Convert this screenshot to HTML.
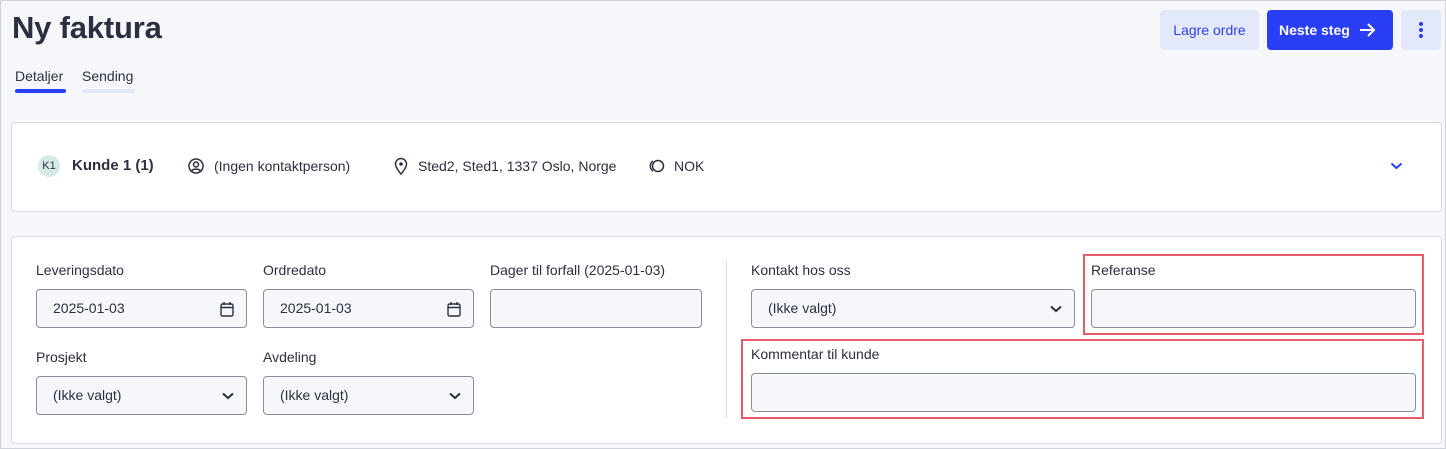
<!DOCTYPE html><html><head><style>
*{box-sizing:border-box;margin:0;padding:0}
body{width:1446px;height:449px;background:#f6f7fb;font-family:"Liberation Sans",sans-serif;color:#2b3040;position:relative;overflow:hidden}
.frame{position:absolute;left:0;top:0;width:1446px;height:449px;border:1px solid #cfd2d8;pointer-events:none}
.a{position:absolute}
.card{position:absolute;background:#fff;border:1px solid #d8dbe0;border-radius:4px}
.lbl{position:absolute;font-size:14px;color:#2b3040}
.inp{position:absolute;height:39px;background:#f6f7fb;border:1px solid #8a8e99;border-radius:4px;font-size:14px;padding:0 16px;line-height:37px}
.ic{position:absolute;right:12px;top:11px}
.red{position:absolute;border:2px solid #e85b6a}
</style></head><body>
<div class="a" style="left:12px;top:10px;font-size:31px;font-weight:bold;letter-spacing:-0.2px">Ny faktura</div>
<div class="a" style="left:15px;top:68px;font-size:14px">Detaljer</div>
<div class="a" style="left:15px;top:89px;width:51px;height:4px;border-radius:2px;background:#2a3ff5"></div>
<div class="a" style="left:82px;top:68px;font-size:14px">Sending</div>
<div class="a" style="left:82px;top:89px;width:53px;height:4px;border-radius:2px;background:#e3e8f8"></div>
<div class="a" style="left:1160px;top:10px;width:99px;height:40px;background:#e3e8fb;border-radius:4px;color:#2b3ff0;font-size:14px;text-align:center;line-height:40px">Lagre ordre</div>
<div class="a" style="left:1267px;top:10px;width:126px;height:40px;background:#2a3ef5;border-radius:4px;color:#fff;font-size:14px;line-height:40px;padding-left:12px;font-weight:bold">Neste steg
<svg class="a" style="left:92px;top:12px" width="17" height="16" viewBox="0 0 17 16"><path d="M1 8H15M9 2L15 8L9 14" stroke="#fff" stroke-width="2" fill="none"/></svg></div>
<div class="a" style="left:1401px;top:10px;width:40px;height:40px;background:#e3e8fb;border-radius:4px">
<svg class="a" style="left:17px;top:11px" width="6" height="18"><circle cx="3" cy="3" r="2" fill="#2b3ff0"/><circle cx="3" cy="9" r="2" fill="#2b3ff0"/><circle cx="3" cy="15" r="2" fill="#2b3ff0"/></svg></div>

<div class="card" style="left:11px;top:122px;width:1431px;height:90px"></div>
<div class="a" style="left:38px;top:155px;width:22px;height:22px;border-radius:50%;background:#d6ebe8;font-size:11px;text-align:center;line-height:22px">K1</div>
<div class="a" style="left:72px;top:157px;font-size:15px;font-weight:bold">Kunde 1 (1)</div>
<svg class="a" style="left:188px;top:158px" width="16" height="16" viewBox="0 0 16 16"><circle cx="8" cy="8" r="7" stroke="#2b3040" stroke-width="1.5" fill="none"/><circle cx="8" cy="6.5" r="2.5" stroke="#2b3040" stroke-width="1.5" fill="none"/><path d="M3.5 13C5 10.5 11 10.5 12.5 13" stroke="#2b3040" stroke-width="1.5" fill="none"/></svg>
<div class="a" style="left:214px;top:158px;font-size:14px">(Ingen kontaktperson)</div>
<svg class="a" style="left:394px;top:157px" width="14" height="18" viewBox="0 0 14 18"><path d="M7 17C7 17 1.5 11 1.5 7A5.5 5.5 0 0 1 12.5 7C12.5 11 7 17 7 17Z" stroke="#2b3040" stroke-width="1.5" fill="none"/><circle cx="7" cy="7" r="1.8" fill="#2b3040"/></svg>
<div class="a" style="left:418px;top:158px;font-size:14px">Sted2, Sted1, 1337 Oslo, Norge</div>
<svg class="a" style="left:648px;top:159px" width="18" height="14" viewBox="0 0 18 14"><circle cx="10" cy="7" r="5.5" stroke="#2b3040" stroke-width="1.5" fill="none"/><path d="M5 2A6 6 0 0 0 5 12" stroke="#2b3040" stroke-width="1.5" fill="none"/></svg>
<div class="a" style="left:674px;top:158px;font-size:14px">NOK</div>
<svg class="a" style="left:1390px;top:162px" width="13" height="8" viewBox="0 0 13 8"><path d="M1.5 1.5L6.5 6L11.5 1.5" stroke="#2b3ff0" stroke-width="2" fill="none"/></svg>

<div class="card" style="left:11px;top:236px;width:1431px;height:208px"></div>
<div class="lbl" style="left:36px;top:262px">Leveringsdato</div>
<div class="inp" style="left:36px;top:289px;width:211px">2025-01-03<svg class="ic" width="14" height="16" viewBox="0 0 14 16"><rect x="1" y="3" width="12" height="12" rx="1.5" stroke="#2b3040" stroke-width="1.4" fill="none"/><path d="M1 6.5H13M4 1V4M10 1V4" stroke="#2b3040" stroke-width="1.4"/></svg></div>
<div class="lbl" style="left:263px;top:262px">Ordredato</div>
<div class="inp" style="left:263px;top:289px;width:211px">2025-01-03<svg class="ic" width="14" height="16" viewBox="0 0 14 16"><rect x="1" y="3" width="12" height="12" rx="1.5" stroke="#2b3040" stroke-width="1.4" fill="none"/><path d="M1 6.5H13M4 1V4M10 1V4" stroke="#2b3040" stroke-width="1.4"/></svg></div>
<div class="lbl" style="left:490px;top:262px">Dager til forfall (2025-01-03)</div>
<div class="inp" style="left:490px;top:289px;width:212px"></div>
<div class="lbl" style="left:36px;top:349px">Prosjekt</div>
<div class="inp" style="left:36px;top:376px;width:211px">(Ikke valgt)<svg class="ic" style="top:15px" width="12" height="8" viewBox="0 0 12 8"><path d="M1 1.5L6 6L11 1.5" stroke="#2b3040" stroke-width="2" fill="none"/></svg></div>
<div class="lbl" style="left:263px;top:349px">Avdeling</div>
<div class="inp" style="left:263px;top:376px;width:211px">(Ikke valgt)<svg class="ic" style="top:15px" width="12" height="8" viewBox="0 0 12 8"><path d="M1 1.5L6 6L11 1.5" stroke="#2b3040" stroke-width="2" fill="none"/></svg></div>
<div class="a" style="left:726px;top:261px;width:1px;height:157px;background:#d8dbe0"></div>
<div class="lbl" style="left:751px;top:262px">Kontakt hos oss</div>
<div class="inp" style="left:751px;top:289px;width:324px">(Ikke valgt)<svg class="ic" style="top:15px" width="12" height="8" viewBox="0 0 12 8"><path d="M1 1.5L6 6L11 1.5" stroke="#2b3040" stroke-width="2" fill="none"/></svg></div>
<div class="red" style="left:1083px;top:254px;width:341px;height:81px"></div>
<div class="lbl" style="left:1091px;top:262px">Referanse</div>
<div class="inp" style="left:1091px;top:289px;width:325px"></div>
<div class="red" style="left:741px;top:339px;width:683px;height:80px"></div>
<div class="lbl" style="left:751px;top:346px">Kommentar til kunde</div>
<div class="inp" style="left:751px;top:373px;width:665px"></div>
<div class="frame"></div>
</body></html>
